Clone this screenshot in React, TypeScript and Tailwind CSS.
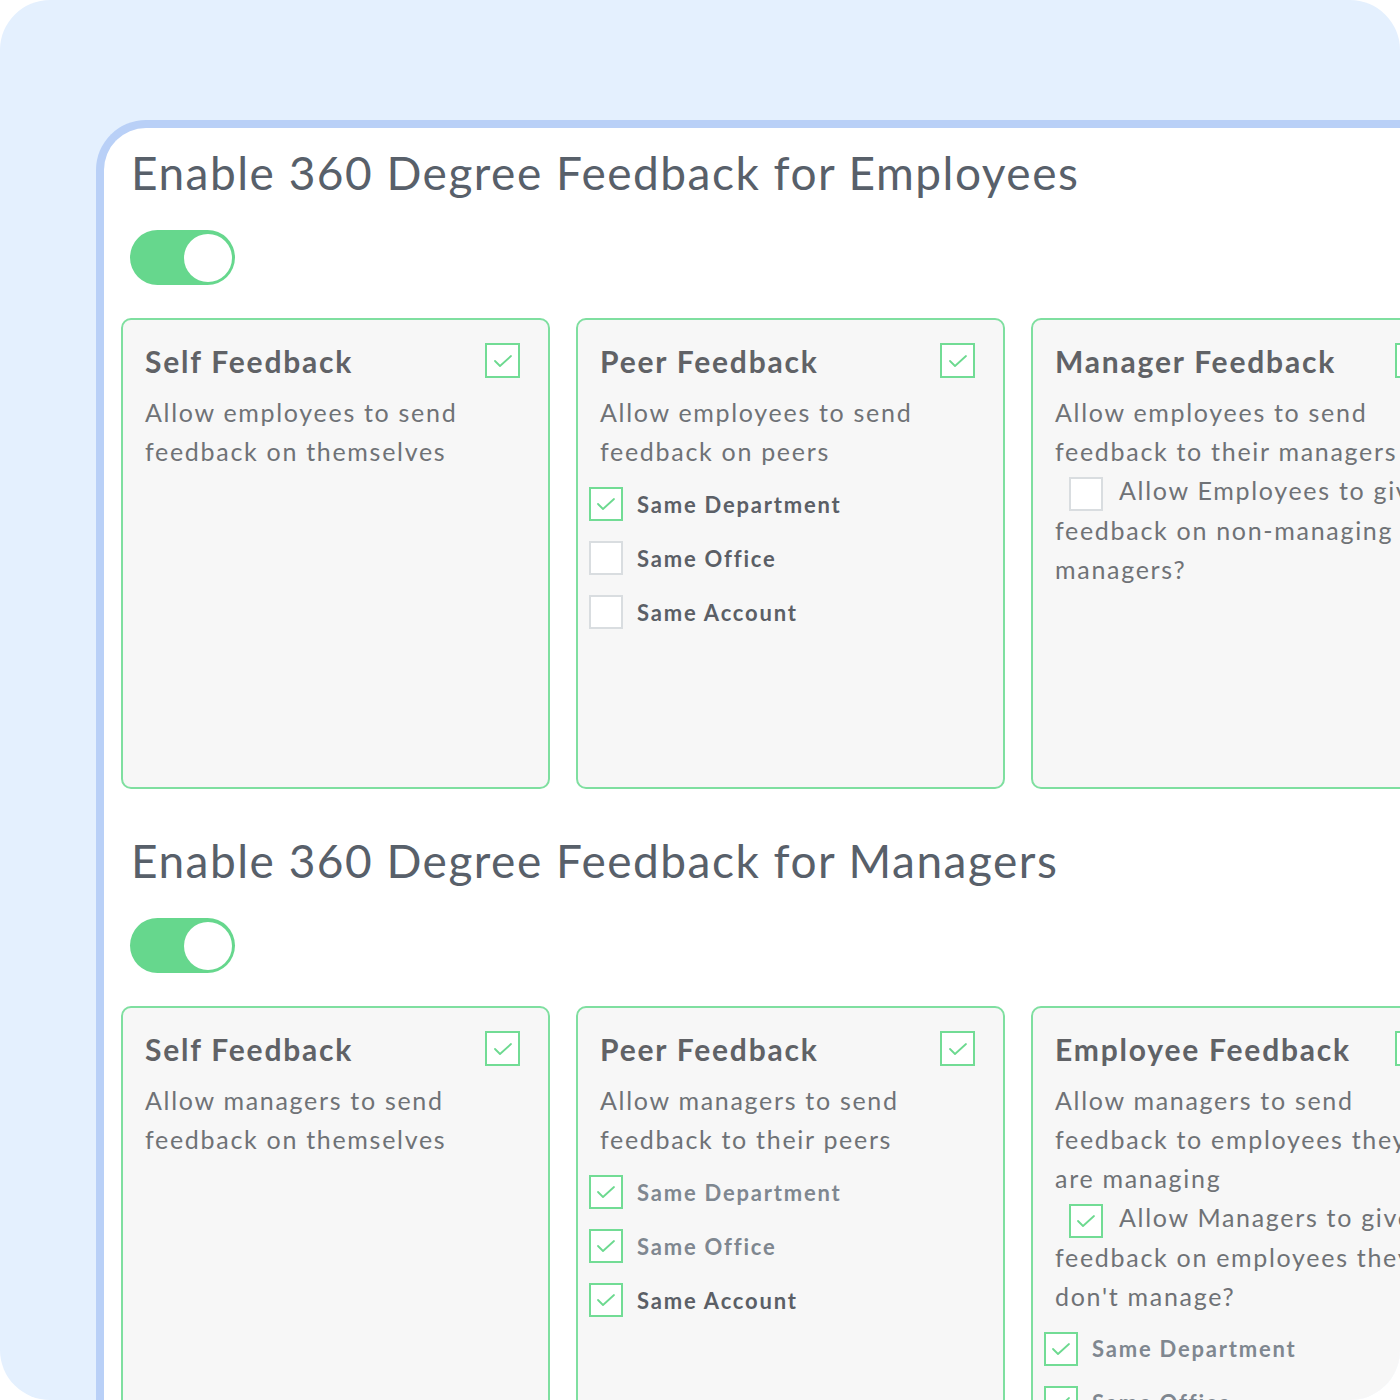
import React from "react";

const FONT = { fontFamily: "Lato, 'Noto Sans', sans-serif" };

function Check({ checked, size = 35 }: { checked: boolean; size?: number }) {
  return (
    <div
      className={`shrink-0 bg-white border-2 flex items-center justify-center ${checked ? "border-[#72dc95]" : "border-[#d9dde0]"}`}
      style={{ width: size, height: size }}
    >
      {checked && (
        <svg width="20" height="14" viewBox="0 0 20 14" fill="none">
          <polyline points="2,7 7,12 18,2" stroke="#6cd98f" strokeWidth="1.8" strokeLinecap="round" strokeLinejoin="round" />
        </svg>
      )}
    </div>
  );
}

function Option({ label, checked, light }: { label: string; checked: boolean; light?: boolean }) {
  return (
    <div className="flex items-center h-[34px]">
      <Check checked={checked} size={34} />
      <span className={`ml-[14px] text-[22px] font-bold tracking-[1.8px] ${light ? "text-[#7f8790]" : "text-[#5b5f66]"}`}>{label}</span>
    </div>
  );
}

function Card({ title, children, minH = 471 }: { title: string; children?: React.ReactNode; minH?: number }) {
  return (
    <div
      className="w-[429px] shrink-0 rounded-[10px] border-2 border-[#7fdfa0] bg-[#f7f7f7] pt-[23px] pr-[28px] pl-[22px]"
      style={{ minHeight: minH }}
    >
      <div className="flex items-start justify-between">
        <div className="text-[30px] font-bold tracking-[1.8px] text-[#606266] leading-[36px] whitespace-nowrap">{title}</div>
        <Check checked={true} />
      </div>
      {children}
    </div>
  );
}

function Desc({ children }: { children: React.ReactNode }) {
  return <div className="mt-[14px] text-[25px] leading-[39px] tracking-[1.7px] text-[#6f7276] whitespace-nowrap">{children}</div>;
}

function Toggle() {
  return (
    <div className="w-[105px] h-[55px] rounded-full bg-[#66d78d] flex items-center justify-end pr-[3px]">
      <div className="w-[48px] h-[48px] rounded-full bg-white" />
    </div>
  );
}

function Section({ title, cards }: { title: string; cards: React.ReactNode }) {
  return (
    <div>
      <div className="ml-[10px] text-[46px] leading-[56px] tracking-[1.5px] text-[#58606a] whitespace-nowrap">{title}</div>
      <div className="ml-[9px] mt-[29px]">
        <Toggle />
      </div>
      <div className="mt-[33px] flex gap-[26px]">{cards}</div>
    </div>
  );
}

export default function App() {
  return (
    <div className="w-[1400px] h-[1400px] bg-white" style={FONT}>
      <div className="w-full h-full rounded-[50px] bg-[#e4f0fe] overflow-hidden pt-[120px] pl-[96px]">
        <div className="w-[1400px] h-[1400px] bg-white border-l-8 border-t-8 border-[#b9d0f7] rounded-tl-[50px] pl-[17px] pt-[17px]">
          <Section
            title="Enable 360 Degree Feedback for Employees"
            cards={
              <>
                <Card title="Self Feedback">
                  <Desc>
                    Allow employees to send
                    <br />
                    feedback on themselves
                  </Desc>
                </Card>
                <Card title="Peer Feedback">
                  <Desc>
                    Allow employees to send
                    <br />
                    feedback on peers
                  </Desc>
                  <div className="-ml-[11px] mt-[16px] flex flex-col gap-[20px]">
                    <Option label="Same Department" checked={true} />
                    <Option label="Same Office" checked={false} />
                    <Option label="Same Account" checked={false} />
                  </div>
                </Card>
                <Card title="Manager Feedback">
                  <Desc>
                    Allow employees to send
                    <br />
                    feedback to their managers
                    <br />
                    <span className="inline-flex items-center align-middle ml-[14px] mr-[16px]">
                      <Check checked={false} size={34} />
                    </span>
                    Allow Employees to give
                    <br />
                    feedback on non-managing
                    <br />
                    managers?
                  </Desc>
                </Card>
              </>
            }
          />
          <div className="mt-[44px]">
            <Section
              title="Enable 360 Degree Feedback for Managers"
              cards={
                <>
                  <Card title="Self Feedback" minH={600}>
                    <Desc>
                      Allow managers to send
                      <br />
                      feedback on themselves
                    </Desc>
                  </Card>
                  <Card title="Peer Feedback" minH={600}>
                    <Desc>
                      Allow managers to send
                      <br />
                      feedback to their peers
                    </Desc>
                    <div className="-ml-[11px] mt-[16px] flex flex-col gap-[20px]">
                      <Option label="Same Department" checked={true} light />
                      <Option label="Same Office" checked={true} light />
                      <Option label="Same Account" checked={true} />
                    </div>
                  </Card>
                  <Card title="Employee Feedback" minH={600}>
                    <Desc>
                      Allow managers to send
                      <br />
                      feedback to employees they
                      <br />
                      are managing
                      <br />
                      <span className="inline-flex items-center align-middle ml-[14px] mr-[16px]">
                        <Check checked={true} size={34} />
                      </span>
                      Allow Managers to give
                      <br />
                      feedback on employees they
                      <br />
                      don't manage?
                    </Desc>
                    <div className="-ml-[11px] mt-[16px] flex flex-col gap-[20px]">
                      <Option label="Same Department" checked={true} light />
                      <Option label="Same Office" checked={true} light />
                      <Option label="Same Account" checked={true} light />
                    </div>
                  </Card>
                </>
              }
            />
          </div>
        </div>
      </div>
    </div>
  );
}
